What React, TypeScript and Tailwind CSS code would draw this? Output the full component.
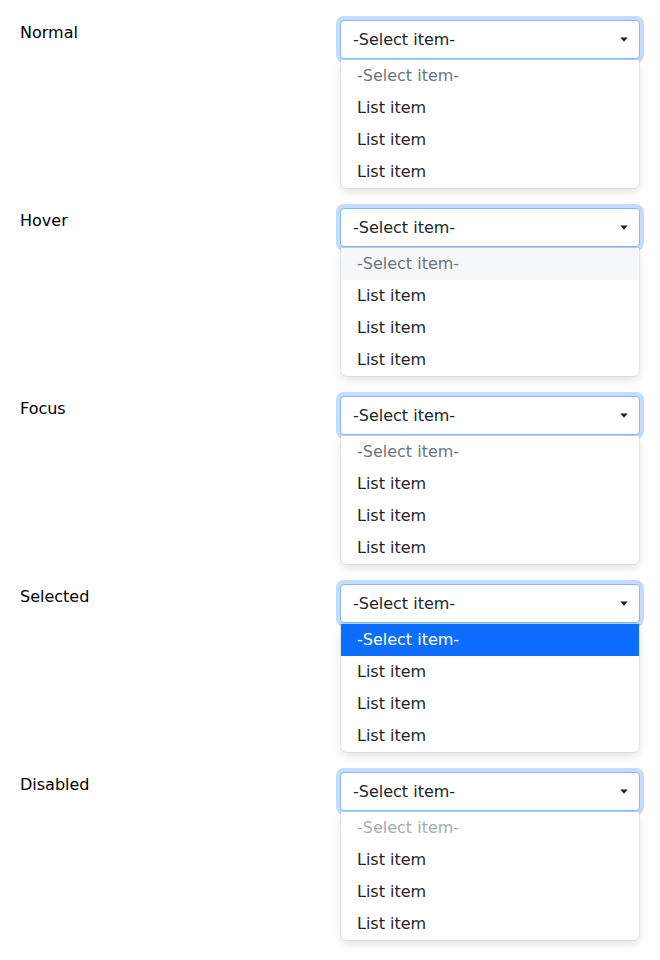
const STATES = ['Normal', 'Hover', 'Focus', 'Selected', 'Disabled'] as const

type State = (typeof STATES)[number]

function Caret() {
  return (
    <svg width="8" height="5" viewBox="0 0 8 5" className="shrink-0">
      <path d="M0.2 0.5 L7.8 0.5 L4 4.8 Z" fill="#212529" />
    </svg>
  )
}

function Dropdown({ state }: { state: State }) {
  const firstClass =
    state === 'Selected'
      ? 'bg-[#0d6efd] text-white'
      : state === 'Hover'
      ? 'bg-[#f6f7f8] text-[#6c757d]'
      : state === 'Disabled'
      ? 'text-[#a6abb0]'
      : 'text-[#6c757d]'

  return (
    <div className="relative w-[300px]">
      {/* Select box */}
      <div className="flex h-[39px] items-center justify-between rounded-[4px] border border-[#86b7fe] bg-white pl-3 pr-[11px] text-[#212529] shadow-[0_0_0_4px_rgba(13,110,253,0.25)]">
        <span>-Select item-</span>
        <Caret />
      </div>

      {/* Menu */}
      <div className="relative z-10 mx-px mt-px overflow-hidden rounded-b-[6px] bg-white shadow-[0_4px_10px_rgba(0,0,0,0.12),0_0_0_1px_rgba(0,0,0,0.05)]">
        <div className={`flex h-8 items-center px-4 ${firstClass}`}>-Select item-</div>
        {[0, 1, 2].map((i) => (
          <div key={i} className="flex h-8 items-center px-4 text-[#212529]">
            List item
          </div>
        ))}
      </div>
    </div>
  )
}

export default function App() {
  return (
    <div
      className="min-h-screen bg-white px-5 pt-5 text-base leading-6 text-black"
      style={{ fontFamily: '"DejaVu Sans", sans-serif' }}
    >
      <div className="flex flex-col gap-[20px]">
        {STATES.map((s) => (
          <div key={s} className="flex items-start">
            <div className="flex-1 pt-px">{s}</div>
            <Dropdown state={s} />
          </div>
        ))}
      </div>
    </div>
  )
}
